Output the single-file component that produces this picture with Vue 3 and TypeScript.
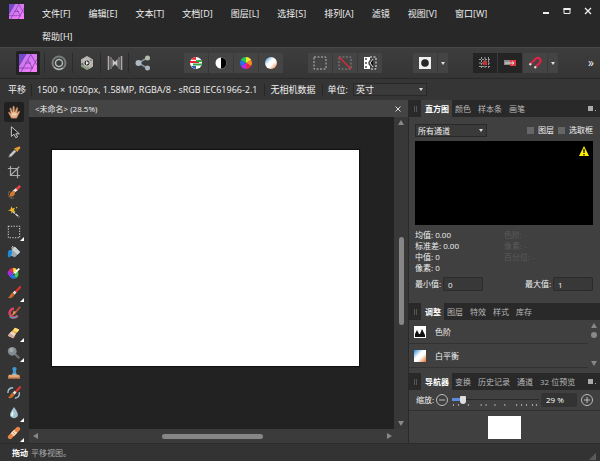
<script setup lang="ts">
import { ref } from 'vue'

interface Tool { name: string; art: string; more?: boolean }

const menus = ['文件[F]', '编辑[E]', '文本[T]', '文档[D]', '图层[L]', '选择[S]', '排列[A]', '滤镜', '视图[V]', '窗口[W]', '帮助[H]']

const brush = '<path d="M15 1.500 8 8.500" stroke="#e0352b" stroke-width="2.600" stroke-linecap="round"/><path d="M9.800 6.500 7.500 8.800" stroke="#e8e8e8" stroke-width="3"/><path d="M8.500 9.500C8 13 4 15 1 13.500 4 12.500 3.500 8 6.800 7.800Z" fill="#c56a2d"/>'

const personas: Tool[] = [
  { name: '液化', art: '<circle cx="8" cy="8" r="6.500" fill="none" stroke="#757d7c" stroke-width="2"/><circle cx="8" cy="8" r="3.500" fill="none" stroke="#b4bcba" stroke-width="1.500"/><path d="M3 12Q7 16 12 13" stroke="#cfd4d0" fill="none"/>' },
  { name: '显影', art: '<path d="m8 1 6 3.500v7L8 15l-6-3.500v-7Z" fill="#6d6f70"/><path d="M8 1 2 4.500v4L9 5l5-.5ZM14 4.500v7L10 14V7Z" fill="#b9b4ae"/><path d="m2 10 0 1.500L8 15l2-1V11Z" fill="#8d9f83"/><circle cx="8" cy="8" r="3.200" fill="#303030" stroke="#ddd"/><path d="m7 6 3 2-3 2Z" fill="#eee"/>' },
  { name: '色调映射', art: '<path d="M1.500 1v14M14.500 1v14" stroke="#b1a7ad" stroke-width="1.600"/><path d="M4 2v12M12 2v12" stroke="#8e8d93" stroke-width="1.200"/><path d="m5.500 4 2.500 3 2.500-3v8L8 9l-2.500 3Z" fill="#c8c8cc"/>' },
  { name: '导出', art: '<path d="m12 3-8.500 5 8.500 5" fill="none" stroke="#89949b" stroke-width="1.500"/><circle cx="3.500" cy="8" r="3" fill="#aebac4"/><circle cx="12.500" cy="3" r="2.500" fill="#b5bda9"/><circle cx="12.500" cy="13" r="2.500" fill="#a9b4bd"/>' },
]

const autos: Tool[] = [
  { name: '自动色阶', art: '<circle cx="8" cy="8" r="6" fill="#fff"/><path d="M8 2a6 6 0 0 0-5 2.800h5Z" fill="#e8252f"/><path d="M2 6h9v2H2Z" fill="#e8252f"/><path d="M5 8.500h9a6 6 0 0 1-.5 2H5Z" fill="#31a845"/><path d="M8 5h5.200l.6 2H8Z" fill="#31a845"/><path d="M3 11h5v3a6 6 0 0 1-5-3Z" fill="#2c62b8"/>' },
  { name: '自动对比度', art: '<circle cx="8" cy="8" r="5.500" fill="#fff"/><path d="M8 2.500a5.500 5.500 0 0 1 0 11Z" fill="#000"/>' },
  { name: '自动颜色', art: '<path d="M8 8V2a6 6 0 0 1 5.200 3Z" fill="#f5e72b"/><path d="m8 8 5.200-3a6 6 0 0 1 0 6Z" fill="#ff8b22"/><path d="m8 8 5.200 3A6 6 0 0 1 8 14Z" fill="#ef2650"/><path d="M8 8v6a6 6 0 0 1-5.200-3Z" fill="#b52bea"/><path d="m8 8-5.200 3a6 6 0 0 1 0-6Z" fill="#2b6df2"/><path d="M8 8 2.800 5A6 6 0 0 1 8 2Z" fill="#25c65b"/>' },
  { name: '自动白平衡', art: '<circle cx="8" cy="8" r="6" fill="url(#wb)"/>' },
]

const selects: Tool[] = [
  { name: '全选', art: '<rect x="2" y="2" width="12" height="12" fill="none" stroke="#bbb" stroke-dasharray="2 1.500"/>' },
  { name: '取消选择', art: '<rect x="2" y="2" width="12" height="12" fill="none" stroke="#888" stroke-dasharray="2 1.500"/><path d="m2 2 12 12" stroke="#d62b32" stroke-width="1.500"/>' },
  { name: '反选', art: '<path d="M2 2h6v3a3.500 3.500 0 0 0 0 6v3H2Z" fill="#fff"/><path d="M3 3h2v2H3ZM3 7h2v2H3ZM3 11h2v2H3Z" fill="#777"/><path d="M8 2h6v12H8" fill="none" stroke="#eee" stroke-dasharray="2 1.500"/><path d="m11 4-3 4 3 4" fill="#111" stroke="#ddd"/>' },
]

const snaps: Tool[] = [
  { name: '显示网格', art: '<path d="M4.500 2v12M8 2v12M11.500 2v12M2 4.500h12M2 8h12M2 11.500h12" stroke="#999" stroke-dasharray="2 1"/><path d="M6 6h4v4H6Z" fill="#c82f37"/>' },
  { name: '移动对齐', art: '<path d="M2 5h6v5H2Z" fill="#8c8c8c"/><path d="M8 5h6v6H8Z" fill="#e43840"/><path d="M3 8h9M10 6.500 12 8l-2 1.500" stroke="#ddd" fill="none"/>' },
]

const tools: Tool[] = [
  { name: '平移', art: '<path d="M5 15 2 9.500Q.8 7.500 2.500 8L4.500 10 3.200 4Q3.500 2.500 4.800 4L6.500 8 6.700 2Q7.700.5 8.500 2L8.800 8 11 3Q12.300 2 12.300 4L11.300 9 13.500 7Q15.500 6.500 14 9L11 15Z" fill="#e9b58c" stroke="#9d6541" stroke-width=".7"/><path d="M6 11q2-2 4 0" stroke="#fff0d5" fill="none"/>' },
  { name: '移动', art: '<path d="M5 2v11l3-2.500 2 4 2-1-2-3.500h4Z" fill="#262626" stroke="#ccc" stroke-width="1.100"/>' },
  { name: '颜色选取器', art: '<path d="m2 14 1-3 5.500-5.500 2 2L5 13Z" fill="#ccd0cb" stroke="#777" stroke-width=".6"/><path d="m8 4 4 4 1-2 2-2q1-3-2-2l-3 1Z" fill="#e69a32"/>' },
  { name: '裁剪', art: '<path d="M4 1v11h11M1 4h11v11M3.500 12.500 14 2" fill="none" stroke="#aaa" stroke-width="1.400"/>' },
  { name: '选择画笔', art: '<path d="m15 1-5 5" stroke="#ed4343" stroke-width="3"/><path d="m11 5-4 3" stroke="#eee" stroke-width="3"/><path d="M9 7C10 11 7 14 3 13 3 9 5 6 9 7Z" fill="#d17932"/><path d="M3 7Q0 11 4 15h4" fill="none" stroke="#ba8355" stroke-dasharray="2 1"/>' },
  { name: '泛色选择', art: '<path d="m6 7 8 7" stroke="#ddd" stroke-width="1.500" stroke-dasharray="4 1"/><path d="m5 1 1 3 3-1-1 3 2 2-3-.5L5 10V7L1 6l3-1ZM11 2l1 1-1 1-1-1Z" fill="#f0b928"/>' },
  { name: '矩形选框', art: '<path d="M1.500 1.500h13v13h-13Z" fill="none" stroke="#ccc" stroke-width="1.200" stroke-dasharray="1.500 1.500"/>', more: true },
  { name: '填充', art: '<path d="m4 7 5-5 6 6-6 6-5-2Z" fill="#9ba7ad"/><path d="m9 2 6 6-3 3-6-6Z" fill="#c9d1d4"/><path d="M6 5Q5-1 9 4" fill="none" stroke="#eee"/><path d="M5 6C1 5 1 8 1 13q2 2 3 0l2-4Z" fill="#198bdb"/>' },
  { name: '渐变', art: '<path d="M7 8V2a6 6 0 0 1 5 3Z" fill="#f4eb3c"/><path d="m7 8 5-3q3 6-2 9Z" fill="#44c953"/><path d="m7 8 3 6q-4 2-7-2Z" fill="#2376e9"/><path d="m7 8-4 4Q-1 8 2 5Z" fill="#aa2be6"/><path d="M7 8 2 5q2-3 5-3Z" fill="#ed285e"/><path d="m14 3-7 7" stroke="#fff" stroke-width="2"/><path d="m8 8 1.500 1.500L6 11Z" fill="#222"/>' },
  { name: '画笔', art: brush, more: true },
  { name: '颜色替换', art: '<path d="M8 3A5 5 0 1 0 12 11" fill="none" stroke="#d84268" stroke-width="3"/><path d="M3 12q4 4 9-1" stroke="#5da0bd" fill="none" stroke-width="1.500"/><path d="m15 1-6 7" stroke="#bd5037" stroke-width="2"/><path d="M10 6q0 5-6 5 3-1 3-5Z" fill="#d99148"/>' },
  { name: '擦除', art: '<path d="m1 11 8-9 5 2-7 9Z" fill="#efb24b"/><path d="m1 11 4-5 5 3-3 5Z" fill="#e6ded5"/><path d="m1 11 6 3 2-2-6-4Z" fill="#d9a794"/><path d="m9 2 5 2-2 3-5-2Z" fill="#ffdf75"/>', more: true },
  { name: '减淡', art: '<path d="m9 9 5 5" stroke="#6b7175" stroke-width="2.500"/><circle cx="6" cy="6" r="5" fill="#858b8e"/><circle cx="5" cy="4.500" r="2.500" fill="#a3a9ab"/>', more: true },
  { name: '克隆', art: '<path d="M2 10h12l1 4H1Z" fill="#e6a975"/><path d="M1 13h14v1.500H1Z" fill="#b9724b"/><path d="M7 5h3l1 5H6Z" fill="#4a98c5"/><circle cx="8.500" cy="3.500" r="2.500" fill="#3e99d6"/><path d="M6 9.500h5" stroke="#badced"/>' },
  { name: '撤销画笔', art: brush + '<path d="M7 2Q1 2 1 8M9 14q6-1 5-7" fill="none" stroke="#a9c4d9" stroke-width="1.500"/>' },
  { name: '模糊', art: '<path d="M8 1Q2 9 4 12q4 4 8 0 2-3-4-11Z" fill="#a4c3cf"/><path d="M7 5q-4 6-1 7 2-2 1-7Z" fill="#eaf7fa"/>', more: true },
  { name: '修复', art: '<path d="m3.500 12.500 9-9" stroke="#e9854b" stroke-width="5" stroke-linecap="round"/><path d="m6 10 4-4" stroke="#ffe0bd" stroke-width="5"/><path d="m6 9 1 1m0-3 2 2m0-3 1 1" stroke="#bb805d"/>', more: true },
]

const histTabs = ['直方图', '颜色', '样本条', '画笔']
const adjTabs = ['调整', '图层', '特效', '样式', '库存']
const navTabs = ['导航器', '变换', '历史记录', '通道', '32 位预览']
const ticks = [2, 7, 17, 30, 35, 44, 54, 66, 71, 76, 82, 86]

const minValue = ref('0')
const maxValue = ref('1')
const zoom = ref(29)
</script>

<template>
  <div class="app">
    <svg class="defs" aria-hidden="true">
      <defs>
        <linearGradient id="wb" x1="0" y1="0" x2="1" y2="1"><stop offset="0" stop-color="#2388d8" /><stop offset=".4" stop-color="#fff" /><stop offset=".6" stop-color="#fff" /><stop offset="1" stop-color="#e86a20" /></linearGradient>
        <linearGradient id="logo" x1="0" y1="0" x2="1" y2="1"><stop offset="0" stop-color="#b873f2" /><stop offset="1" stop-color="#ff7dfa" /></linearGradient>
        <symbol id="affinity" viewBox="0 0 18 18">
          <path d="M0 0h18v18H0Z" fill="url(#logo)" />
          <path d="M0 0h7L0 12Z" fill="#7449cc" />
          <path d="M7 0 0 12M2 18 12 0M6 9h6M12 1l6 10M9 6l5 9M18 5l-7 13M0 14h13" stroke="#6b3a96" stroke-width=".7" fill="none" />
        </symbol>
      </defs>
    </svg>

    <header class="titlebar">
      <svg class="logo"><use href="#affinity" /></svg>
      <nav class="menus">
        <button v-for="m in menus" :key="m" class="menu">{{ m }}</button>
      </nav>
      <div class="window">
        <button aria-label="最小化"><svg viewBox="0 0 8 8"><path d="M1 5h6v2H1Z" fill="#eee" /></svg></button>
        <button aria-label="最大化"><svg viewBox="0 0 8 8"><path d="M1 1.500h6v5H1Z" fill="none" stroke="#eee" /><path d="M.5 1h7v2h-7Z" fill="#eee" /></svg></button>
        <button aria-label="关闭"><svg viewBox="0 0 8 8"><path d="m1 1 6 6m0-6L1 7" stroke="#eee" stroke-width="1.300" /></svg></button>
      </div>
    </header>

    <div class="toolbar">
      <div class="personas">
        <button class="persona current" aria-label="照片"><svg><use href="#affinity" /></svg></button>
        <button v-for="p in personas" :key="p.name" class="persona" :aria-label="p.name"><svg viewBox="0 0 16 16" v-html="p.art" /></button>
      </div>
      <div class="group">
        <button v-for="p in autos" :key="p.name" :aria-label="p.name"><svg viewBox="0 0 16 16" v-html="p.art" /></button>
      </div>
      <div class="group wide">
        <button v-for="p in selects" :key="p.name" :aria-label="p.name"><svg viewBox="0 0 16 16" v-html="p.art" /></button>
      </div>
      <div class="group">
        <button aria-label="快速蒙版"><svg viewBox="0 0 16 16"><path d="M2 2h12v12H2Z" fill="#eee" /><circle cx="8" cy="8" r="3.800" fill="#252525" /></svg></button>
        <button class="drop" aria-label="蒙版选项"><i class="caret" /></button>
      </div>
      <div class="group">
        <button v-for="p in snaps" :key="p.name" class="pressed" :aria-label="p.name"><svg viewBox="0 0 16 16" v-html="p.art" /></button>
        <button aria-label="对齐"><svg viewBox="0 0 16 16"><path d="M3 9.500 8.500 4Q11 2 12.800 3.800T12.500 8L8 12.500" fill="none" stroke="#df2348" stroke-width="2.200" /><path d="m2.500 10 1.500-1.500M7.500 13 9 11.500" stroke="#ddd" stroke-width="2.200" /></svg></button>
        <button class="drop" aria-label="对齐选项"><i class="caret" /></button>
      </div>
      <button class="overflow" aria-label="更多">»</button>
    </div>

    <div class="context">
      <span class="mode">平移</span>
      <span class="info">1500 × 1050px, 1.58MP, RGBA/8 - sRGB IEC61966-2.1</span>
      <span class="camera">无相机数据</span>
      <label for="unit">单位:</label>
      <span class="select unit"><select id="unit"><option>英寸</option></select><i class="caret" /></span>
    </div>

    <main class="body">
      <aside class="tools">
        <button v-for="(t, i) in tools" :key="t.name" class="tool" :class="{ active: i === 0 }" :aria-label="t.name">
          <svg viewBox="0 0 16 16" v-html="t.art" />
          <i v-if="t.more" class="more" />
        </button>
      </aside>

      <section class="document">
        <div class="doctab"><span>&lt;未命名&gt; (28.5%)</span><button aria-label="关闭文档"><svg viewBox="0 0 8 8"><path d="m1.500 1.500 5 5m0-5-5 5" stroke="#ddd" /></svg></button></div>
        <div class="view">
          <div class="canvas"><div class="artboard" /></div>
          <div class="vscroll"><i class="tri up" /><div class="vtrack"><div class="vthumb" /></div><i class="tri down" /></div>
        </div>
        <div class="hscroll"><i class="tri left" /><div class="hthumb" /><i class="tri right" /></div>
      </section>

      <aside class="panels">
        <section>
          <div class="tabs">
            <i class="grip" />
            <button v-for="(t, i) in histTabs" :key="t" :class="{ on: i === 0 }">{{ t }}</button>
            <button class="options" aria-label="面板选项" />
          </div>
          <div class="histogram">
            <div class="channels">
              <span class="select"><select aria-label="通道"><option>所有通道</option></select><i class="caret" /></span>
              <span class="checks">
                <label><input type="checkbox">图层</label>
                <label><input type="checkbox">选取框</label>
              </span>
            </div>
            <div class="graph">
              <svg viewBox="0 0 10 10"><path d="M5 0 10 10H0Z" fill="#fff200" /><path d="M4.300 3h1.400v4H4.300ZM4.300 8h1.400v1.500H4.300Z" fill="#111" /></svg>
            </div>
            <div class="stats">
              <div><p>均值: 0.00</p><p>标准差: 0.00</p><p>中值: 0</p><p>像素: 0</p></div>
              <div class="faded"><p>色阶: -</p><p>像素: -</p><p>百分位: -</p></div>
            </div>
            <div class="range">
              <label>最小值: <input v-model="minValue" type="text"></label>
              <label>最大值: <input v-model="maxValue" type="text"></label>
            </div>
          </div>
        </section>

        <section>
          <div class="tabs">
            <i class="grip" />
            <button v-for="(t, i) in adjTabs" :key="t" :class="{ on: i === 0 }">{{ t }}</button>
          </div>
          <div class="adjust">
            <ul>
              <li><svg viewBox="0 0 12 12"><path d="M0 0h12v12H0Z" fill="#fff" /><path d="M1 11V8l2-4 2 4 1 0 2-5 3 6v2Z" fill="#111" /></svg>色阶</li>
              <li><svg viewBox="0 0 12 12"><path d="M0 0h12v12H0Z" fill="url(#wb)" /></svg>白平衡</li>
            </ul>
            <div class="listscroll"><i class="tri up" /><i class="dot" /><i class="tri down" /></div>
          </div>
        </section>

        <section class="navigator">
          <div class="tabs">
            <i class="grip" />
            <button v-for="(t, i) in navTabs" :key="t" :class="{ on: i === 0 }">{{ t }}</button>
            <button class="options" aria-label="面板选项" />
          </div>
          <div class="zoom">
            <label for="zoom">缩放:</label>
            <button class="round" aria-label="缩小"><svg viewBox="0 0 14 14"><circle cx="7" cy="7" r="5.500" /><path d="M4 7h6" /></svg></button>
            <div class="slider">
              <input id="zoom" v-model="zoom" type="range" min="10" max="210">
              <svg viewBox="0 0 88 3" preserveAspectRatio="none"><path v-for="t in ticks" :key="t" :d="`M${t - 1} 0h1v2h-1Z`" fill="#aaa" /></svg>
            </div>
            <output for="zoom">{{ zoom }} %</output>
            <button class="round" aria-label="放大"><svg viewBox="0 0 14 14"><circle cx="7" cy="7" r="5.500" /><path d="M4 7h6M7 4v6" /></svg></button>
          </div>
          <div class="preview"><div class="thumb" /></div>
        </section>
      </aside>
    </main>

    <footer class="status"><b>拖动</b><span>平移视图。</span><svg viewBox="0 0 8 8"><path d="M8 0v8H0Z" fill="#666" /><path d="m2 8 6-6M5 8l3-3" stroke="#444" /></svg></footer>
  </div>
</template>

<style>
body { background: #333; }
</style>

<style scoped>
* { box-sizing: border-box; }
.app { display: flex; flex-direction: column; min-height: 100vh; background: #343434; color: #f0f0f0; font: 9px/12px "Open Sans", "Noto Sans CJK SC", sans-serif; white-space: nowrap; }
.defs { position: absolute; width: 0; height: 0; }
svg { display: block; }
button, select, input { margin: 0; padding: 0; border: 0; background: none; color: inherit; font: inherit; }
p, ul { margin: 0; padding: 0; list-style: none; }
.titlebar { display: flex; align-items: flex-start; height: 47px; padding: 4px 8px 0 9px; background: #282828; }
.logo { flex: none; width: 15px; height: 15px; }
.menus { flex: 1; display: flex; flex-wrap: wrap; column-gap: 18px; row-gap: 11px; max-width: 500px; padding: 4px 0 0 18px; }
.menu { line-height: 12px; }
.window { display: flex; gap: 13px; margin-left: auto; padding-top: 3px; }
.window svg, .doctab svg { width: 8px; height: 8px; }

.toolbar { display: flex; align-items: center; height: 32px; padding: 0 6px 0 16px; background: linear-gradient(#3d3d3d, #353535); border-top: 1px solid #484848; border-bottom: 1px solid #292929; }
.personas { display: flex; align-items: center; margin-right: 28px; }
.persona { display: flex; align-items: center; justify-content: center; width: 28px; height: 20px; border-left: 1px solid #2b2b2b; }
.persona svg { width: 16px; height: 16px; }
.persona.current { width: 24px; height: 24px; margin-right: 4px; border: 0; border-radius: 2px; background: #222; }
.persona.current svg { width: 18px; height: 18px; }
.group { display: flex; gap: 1px; margin-right: 25px; }
.group.wide { margin-right: 31px; }
.group button { display: flex; align-items: center; justify-content: center; width: 24px; height: 20px; background: #444; }
.group svg { width: 16px; height: 16px; }
.group button.drop { width: 10px; }
.group button.pressed { background: #242424; }
.caret { width: 0; height: 0; border: 2px solid transparent; border-top: 3px solid #ddd; border-bottom: 0; }
.overflow { margin-left: auto; font-size: 12px; }

.context { display: flex; align-items: center; height: 21px; padding-left: 8px; background: #353535; }
.context > span:not(.select) { border-right: 1px solid #272727; }
.mode { width: 24px; }
.info { padding: 0 7px 0 5px; }
.camera { margin-right: 5px; padding: 0 6px 0 5px; }
.context label { margin-right: 5px; }
.select { display: flex; align-items: center; width: 72px; height: 13px; padding-right: 3px; border: 1px solid #292929; background: #3a3a3a; }
.select select { flex: 1; min-width: 0; padding-left: 2px; appearance: none; outline: 0; line-height: 11px; }
.select.unit { width: 74px; }

.body { flex: 1; display: flex; min-height: 0; }
.tools { display: flex; flex-direction: column; width: 29px; padding: 2px 4px 0; background: #343434; }
.tool { position: relative; flex: 1; display: flex; align-items: center; justify-content: center; width: 20px; height: 20px; border-radius: 2px; }
.tool svg { width: 14px; height: 14px; }
.tool.active { background: #202020; }
.more { position: absolute; right: 0; bottom: 1px; border: 2px solid; border-color: transparent #fff #fff transparent; }

.document { flex: 1; display: flex; flex-direction: column; min-width: 0; background: #3b3b3b; }
.doctab { display: flex; align-items: center; justify-content: space-between; height: 17px; padding: 0 6px; background: #444; font-size: 8px; }
.view { flex: 1; display: flex; }
.canvas { flex: 1; display: flex; padding: 33px 35px 63px 23px; background: #222; }
.artboard { flex: 1; background: #fff; box-shadow: 0 0 1px 1px #111; }
.vscroll { display: flex; flex-direction: column; align-items: center; width: 14px; padding: 3px 0; background: #383838; }
.vtrack { flex: 1; display: flex; align-items: center; padding-top: 16px; }
.vthumb { width: 5px; height: 88px; border-radius: 3px; background: #868686; }
.tri { width: 0; height: 0; border: 3px solid transparent; }
.tri.up { border-bottom: 5px solid #888; border-top: 0; }
.tri.down { border-top: 5px solid #888; border-bottom: 0; }
.tri.left { border-right: 5px solid #888; border-left: 0; }
.tri.right { border-left: 5px solid #888; border-right: 0; }
.hscroll { display: flex; align-items: center; justify-content: space-between; height: 14px; padding: 0 16px 0 4px; background: #3b3b3b; }
.hthumb { width: 101px; height: 5px; border-radius: 3px; background: #868686; }

.panels { display: flex; flex-direction: column; gap: 4px; width: 192px; border-left: 1px solid #2a2a2a; background: #404040; font-size: 8px; }
.tabs { display: flex; align-items: center; height: 17px; padding-right: 4px; background: #292929; color: #b8b8b8; }
.tabs button { height: 17px; padding: 0 4px 0 3px; }
.tabs button.on { padding: 0 3px 0 4px; background: #404040; color: #fff; font-weight: 600; }
.grip { flex: none; width: 3px; height: 6px; margin: 0 4px 0 5px; border: solid #555; border-width: 0 1px; }
.tabs button.options { flex: none; width: 8px; height: 5px; margin-left: auto; padding: 0; background: linear-gradient(#aaa, #aaa) 0 0 / 5px 5px no-repeat, linear-gradient(#aaa, #aaa) 100% 100% / 1px 1px no-repeat; }
.histogram { padding: 7px 7px 8px 6px; }
.channels { display: flex; align-items: center; justify-content: space-between; height: 12px; }
.checks { display: flex; gap: 4px; }
.checks label { display: flex; align-items: center; gap: 4px; }
.checks input { width: 7px; height: 7px; appearance: none; background: #666; }
.graph { display: flex; justify-content: flex-end; height: 84px; margin-top: 5px; padding: 5px 4px; background: #000; }
.graph svg { width: 10px; height: 10px; }
.stats { display: grid; grid-template-columns: 89px 1fr; height: 47px; padding-top: 4px; line-height: 11px; }
.faded { color: #5a5a5a; }
.range { display: flex; justify-content: space-between; margin-top: 5px; }
.range label { display: flex; align-items: center; gap: 2px; }
.range input { width: 40px; height: 14px; padding-left: 4px; border: 1px solid #2b2b2b; border-radius: 2px; background: #383838; }
.adjust { display: flex; height: 49px; }
.adjust ul { flex: 1; }
.adjust li { display: flex; align-items: center; gap: 9px; height: 24px; padding-left: 5px; border-bottom: 1px solid #323232; }
.adjust li svg { width: 12px; height: 12px; }
.listscroll { display: flex; flex-direction: column; align-items: center; width: 12px; padding: 3px 0; }
.dot { width: 6px; height: 6px; margin: 4px 0 auto; border-radius: 50%; background: #888; }
.navigator { flex: 1; display: flex; flex-direction: column; }
.zoom { display: flex; align-items: center; height: 21px; padding: 0 6px 0 7px; border-bottom: 1px solid #303030; }
.round { margin: 0 3px 0 1px; }
.round:last-child { margin: 0 0 0 3px; }
.round svg { width: 14px; height: 14px; fill: none; stroke: #bbb; }
.slider { flex: 1; min-width: 0; padding-top: 2px; }
.slider input { display: block; width: 100%; height: 9px; appearance: none; background: linear-gradient(#5b8bdc, #5b8bdc) 0 3px / 8px 3px no-repeat, linear-gradient(#292929, #292929) 0 4px / 100% 1px no-repeat; }
.slider input::-webkit-slider-thumb { width: 6px; height: 8px; appearance: none; border-radius: 1px 1px 3px 3px; background: #ddd; }
.slider svg { width: 100%; height: 3px; }
.zoom output { width: 36px; height: 14px; margin-left: 2px; padding-left: 5px; border-radius: 2px; background: #333; color: #fff; line-height: 14px; }
.preview { flex: 1; display: flex; align-items: center; justify-content: center; }
.thumb { width: 33px; height: 23px; background: #fff; }

.status { display: flex; align-items: center; gap: 3px; height: 18px; padding: 0 4px 0 12px; border-top: 1px solid #2c2c2c; background: #333; color: #aaa; font-size: 8px; }
.status b { color: #fff; }
.status svg { width: 7px; height: 7px; margin: 7px 0 0 auto; }
</style>
